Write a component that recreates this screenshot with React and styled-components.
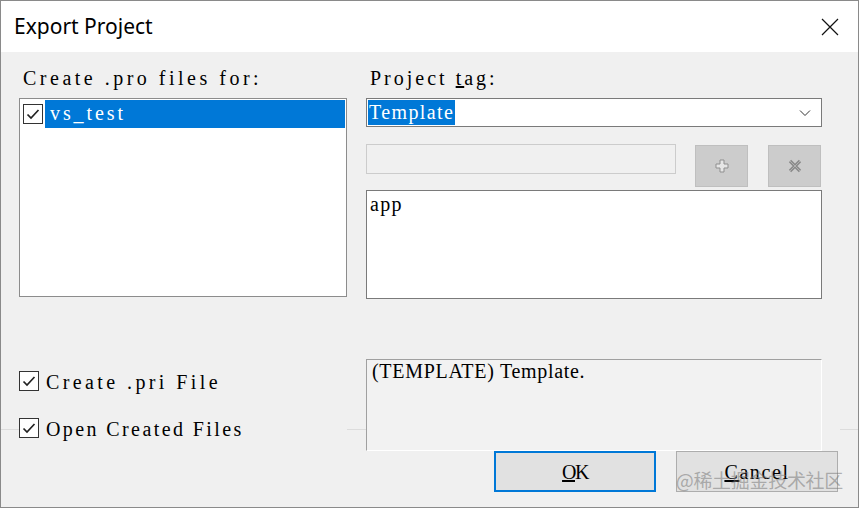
import styled, { createGlobalStyle } from "styled-components"

const GlobalStyle = createGlobalStyle`
    html, body {
        margin: 0;
        padding: 0;
        background: #ffffff;
    }
    * {
        box-sizing: border-box;
    }
`

// the dialog uses a thin serif face with wide, almost fixed-width spacing
const SERIF = `"Liberation Serif", "DejaVu Serif", serif`

function CheckMark() {
    return (
        <svg width="18" height="18" viewBox="0 0 18 18">
            <polyline points="3.5,9.5 7,13 14.5,5" fill="none" stroke="#222" strokeWidth="1.7" />
        </svg>
    )
}

function CheckBox() {
    return (
        <Box>
            <CheckMark />
        </Box>
    )
}

export default function App() {
    return (
        <>
            <GlobalStyle />
            <Window>
                <TitleBar>
                    <Title>Export Project</Title>
                    <CloseButton>
                        <svg width="18" height="18" viewBox="0 0 18 18">
                            <path d="M1 1 L17 17 M17 1 L1 17" stroke="#111" strokeWidth="1.2" />
                        </svg>
                    </CloseButton>
                </TitleBar>

                <Body>
                    <TopGrid>
                        <Label $ls={3.5}>Create .pro files for:</Label>
                        <Label $ls={3}>Project <u>t</u>ag:</Label>

                        <ListBox>
                            <ListItem>
                                <CheckBox />
                                <Selected $wide $ls={2.9}>vs_test</Selected>
                            </ListItem>
                        </ListBox>

                        <RightStack>
                            <Combo>
                                <Selected $ls={1.4}>Template</Selected>
                                <svg width="12" height="8" viewBox="0 0 12 8">
                                    <polyline points="1,1.5 6,6.5 11,1.5" fill="none" stroke="#333" strokeWidth="1" />
                                </svg>
                            </Combo>
                            <InputRow>
                                <DisabledInput />
                                <ToolButton>
                                    <svg width="14" height="14" viewBox="0 0 14 14">
                                        <polygon points="5,1 9,1 9,5 13,5 13,9 9,9 9,13 5,13 5,9 1,9 1,5 5,5" fill="#e6e6e6" stroke="#8f8f8f" strokeWidth="1" />
                                    </svg>
                                </ToolButton>
                                <ToolButton>
                                    <svg width="14" height="14" viewBox="0 0 14 14">
                                        <path d="M2 2 L12 12 M12 2 L2 12" stroke="#8a8a8a" strokeWidth="3.2" />
                                        <path d="M2 2 L12 12 M12 2 L2 12" stroke="#b0b0b0" strokeWidth="1" />
                                    </svg>
                                </ToolButton>
                            </InputRow>
                            <TextArea $ls={1.3}>app</TextArea>
                        </RightStack>
                    </TopGrid>

                    <MiddleGrid>
                        <Options>
                            <Option>
                                <CheckBox />
                                <OptionText $ls={3.4}>Create .pri File</OptionText>
                            </Option>
                            <Option>
                                <CheckBox />
                                <OptionText $ls={2.4}>Open Created Files</OptionText>
                            </Option>
                        </Options>
                        <DescCell>
                            <Description $ls={0.7}>(TEMPLATE) Template.</Description>
                        </DescCell>
                    </MiddleGrid>

                    <Footer>
                        <DialogButton $primary $ls={-1.5}><u>O</u>K</DialogButton>
                        <DialogButton $ls={1.6}><u>C</u>ancel</DialogButton>
                    </Footer>

                    <Watermark>@稀土掘金技术社区</Watermark>
                </Body>
            </Window>
        </>
    )
}

const Window = styled.div`
    width: 859px;
    height: 508px;
    border: 1px solid #8a8a8a;
    display: flex;
    flex-direction: column;
    background: #f0f0f0;
    overflow: hidden;
`
const TitleBar = styled.div`
    height: 51px;
    flex-shrink: 0;
    background: #ffffff;
    display: flex;
    align-items: center;
    justify-content: space-between;
    padding: 0 19px 0 13px;
`
const Title = styled.div`
    font-family: "Noto Sans", "Open Sans", sans-serif;
    font-size: 21px;
    color: #000;
    margin-top: -2px;
`
const CloseButton = styled.div`
    display: flex;
    align-items: center;
    margin-top: 1px;
`
const Body = styled.div`
    position: relative;
    flex: 1;
    padding: 15px 0 0 18px;
    font-family: ${SERIF};
    font-size: 20px;
    color: #000;
`
const TopGrid = styled.div`
    display: grid;
    grid-template-columns: 328px 456px;
    column-gap: 19px;
    row-gap: 9px;
    align-items: start;
`
const Label = styled.div`
    height: 22px;
    line-height: 23px;
    padding-left: 4px;
    white-space: pre;
    letter-spacing: ${props => props.$ls}px;
`
const ListBox = styled.div`
    height: 199px;
    background: #ffffff;
    border: 1px solid #8c8c8c;
    padding: 1px 1px 0 3px;
`
const ListItem = styled.div`
    display: flex;
    align-items: flex-start;
    gap: 2px;
    > div:first-child {
        margin-top: 4px;
    }
`
const Box = styled.div`
    width: 20px;
    height: 20px;
    flex-shrink: 0;
    border: 1px solid #333;
    background: #ffffff;
    display: flex;
    align-items: center;
    justify-content: center;
`
const Selected = styled.span`
    display: block;
    background: #0078d7;
    color: #ffffff;
    height: ${props => props.$wide ? "28px" : "25px"};
    line-height: ${props => props.$wide ? "26px" : "25px"};
    padding: ${props => props.$wide ? "0 0 0 5px" : "0 1px 0 1px"};
    flex: ${props => props.$wide ? "1" : "none"};
    white-space: pre;
    letter-spacing: ${props => props.$ls}px;
`
const RightStack = styled.div`
    display: flex;
    flex-direction: column;
`
const Combo = styled.div`
    height: 29px;
    background: #ffffff;
    border: 1px solid #7a7a7a;
    padding: 1px 10px 1px 1px;
    display: flex;
    align-items: center;
    justify-content: space-between;
`
const InputRow = styled.div`
    display: flex;
    align-items: flex-start;
    margin-top: 17px;
`
const DisabledInput = styled.div`
    width: 310px;
    height: 30px;
    border: 1px solid #cccccc;
    background: #f0f0f0;
    margin-right: 19px;
`
const ToolButton = styled.div`
    width: 53px;
    height: 42px;
    margin-top: 1px;
    margin-right: 20px;
    background: #cccccc;
    border: 1px solid #bfbfbf;
    display: flex;
    align-items: center;
    justify-content: center;
    &:last-child {
        margin-right: 0;
    }
`
const TextArea = styled.div`
    height: 109px;
    margin-top: 3px;
    background: #ffffff;
    border: 1px solid #7a7a7a;
    padding: 2px 3px;
    line-height: 22px;
    letter-spacing: ${props => props.$ls}px;
`
const MiddleGrid = styled.div`
    position: relative;
    z-index: 1;
    display: grid;
    grid-template-columns: 328px 474px;
    column-gap: 19px;
    margin-top: 60px;
    height: 92px;
    margin-bottom: -22px;
`
const Options = styled.div`
    background: #f0f0f0;
    padding-top: 12px;
    display: flex;
    flex-direction: column;
    gap: 27px;
`
const Option = styled.div`
    display: flex;
    align-items: center;
    gap: 7px;
    height: 20px;
`
const OptionText = styled.span`
    white-space: pre;
    line-height: 22px;
    margin-top: 2px;
    letter-spacing: ${props => props.$ls}px;
`
const DescCell = styled.div`
    background: #f0f0f0;
`
const Description = styled.div`
    width: 456px;
    height: 92px;
    background: #f2f2f2;
    border-top: 1px solid #a0a0a0;
    border-left: 1px solid #a0a0a0;
    border-right: 1px solid #ffffff;
    border-bottom: 1px solid #ffffff;
    padding: 0 5px;
    line-height: 22px;
    white-space: pre;
    letter-spacing: ${props => props.$ls}px;
`
const Footer = styled.div`
    margin-left: -18px;
    border-top: 1px solid #dcdcdc;
    padding: 21px 20px 0 0;
    display: flex;
    justify-content: flex-end;
    gap: 20px;
`
const DialogButton = styled.div`
    width: 162px;
    height: 41px;
    background: #e1e1e1;
    border: ${props => props.$primary ? "2px solid #0078d7" : "1px solid #adadad"};
    display: flex;
    align-items: center;
    justify-content: center;
    padding-top: 1px;
    line-height: 1;
    letter-spacing: ${props => props.$ls}px;
`
const Watermark = styled.div`
    position: absolute;
    right: 15px;
    bottom: 14px;
    font-family: "Noto Sans CJK SC", sans-serif;
    font-size: 19px;
    letter-spacing: -0.3px;
    color: rgba(120, 120, 120, 0.55);
    z-index: 2;
`
